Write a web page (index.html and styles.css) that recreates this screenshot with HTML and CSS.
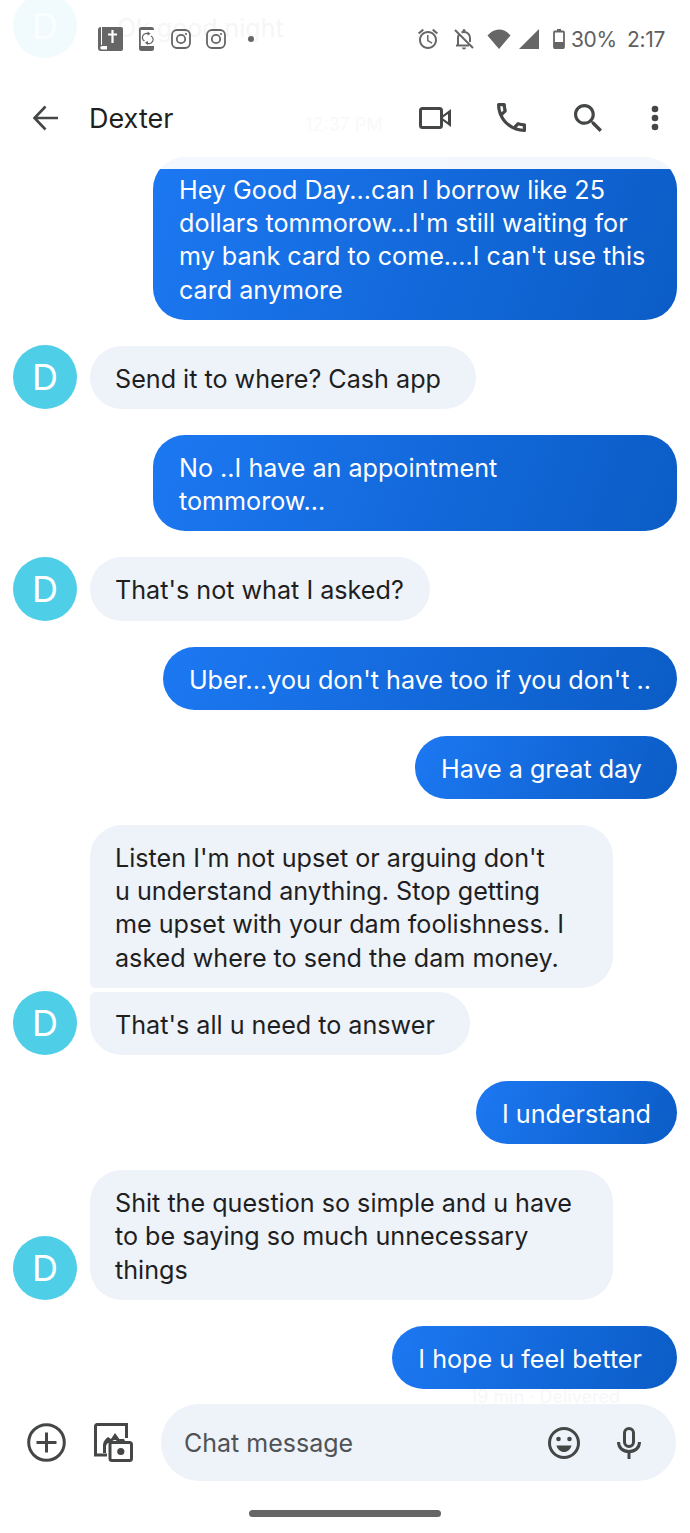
FILE: index.html
```html
<!DOCTYPE html>
<html lang="en">
<head>
    <meta charset="UTF-8">
    <meta name="viewport" content="width=device-width, initial-scale=1.0">
    <title>Dexter</title>
    <link rel="stylesheet" href="styles.css">
</head>
<body>
    <div class="ghost-avatar">D</div>
    <div class="ghost-text">Ok good night</div>
    <div class="ghost-time">12:37 PM</div>
    <div class="veil"></div>

    <div class="status-bar">
        <div class="status-left">
            <svg class="ic-book" viewBox="0 0 25 24"><path fill="#666" d="M3 0h20a2 2 0 0 1 2 2v20a2 2 0 0 1-2 2H3a3 3 0 0 1-3-3V3a3 3 0 0 1 3-3z"/><path fill="none" stroke="#fff" stroke-width="2.200" d="M14.500 3v13M10 7.500h9"/><path fill="none" stroke="#fff" stroke-width="1" d="M3.500 0v18"/><path fill="#fff" d="M4 19h5v3.500H4a1.700 1.700 0 0 1 0-3.500z"/></svg>
            <svg class="ic-sync" viewBox="0 0 15 24"><rect width="15" height="24" rx="2.500" fill="#666"/><rect x="1.800" y="3" width="13.200" height="16" fill="#fff"/><path fill="none" stroke="#666" stroke-width="1.300" d="M5.500 14a3.800 3.800 0 0 1 4-7M12 9a3.800 3.800 0 0 1-4 7"/><path fill="#666" d="M8.500 4.500l3.200 2.200-3.200 1.800zM9 18l-3.200-2.200 3.200-1.800z"/></svg>
            <svg class="ic-insta" viewBox="0 0 20 20"><rect x="1" y="1" width="18" height="18" rx="5" fill="none" stroke="#666" stroke-width="1.800"/><circle cx="10" cy="10" r="4.200" fill="none" stroke="#666" stroke-width="1.800"/><circle cx="15" cy="5" r="1.100" fill="#666"/></svg>
            <svg class="ic-insta" viewBox="0 0 20 20"><rect x="1" y="1" width="18" height="18" rx="5" fill="none" stroke="#666" stroke-width="1.800"/><circle cx="10" cy="10" r="4.200" fill="none" stroke="#666" stroke-width="1.800"/><circle cx="15" cy="5" r="1.100" fill="#666"/></svg>
            <span class="status-dot"></span>
        </div>
        <div class="status-right">
            <svg class="ic-status" viewBox="0 0 24 24"><path fill="#666" d="M22 5.720l-4.600-3.860-1.290 1.530 4.600 3.860L22 5.720zM7.880 3.390L6.600 1.860 2 5.710l1.290 1.530 4.590-3.850zM12.500 8H11v6l4.750 2.850.75-1.230-4-2.370V8zM12 4c-4.970 0-9 4.030-9 9s4.030 9 9 9 9-4.030 9-9-4.030-9-9-9zm0 16c-3.870 0-7-3.130-7-7s3.130-7 7-7 7 3.130 7 7-3.130 7-7 7z"/></svg>
            <svg class="ic-status ic-bell" viewBox="0 0 24 24"><path fill="none" stroke="#666" stroke-width="2" d="M6 17.500V11c0-1.200.3-2.300.8-3.200M9.500 5.500C10.300 5.100 11.100 5 12 5c3.500 0 6 2.700 6 6v4M4 18.500h13M3 3l18 18"/><path fill="#666" d="M10 20.500h4a2 2 0 0 1-4 0zM10.500 5V3.500a1.500 1.500 0 0 1 3 0V5z"/></svg>
            <svg class="ic-wifi" viewBox="0 0 24 20"><path fill="#666" d="M.5 6.500C7-1.500 17-1.500 23.500 6.500L12 20z"/></svg>
            <svg class="ic-signal" viewBox="0 0 20 20"><path fill="#666" d="M20 0v20H0z"/></svg>
            <svg class="ic-battery" viewBox="0 0 12 20"><path fill="#666" d="M4 0h4v2H4z"/><rect x="1" y="2.500" width="10" height="16.500" rx="1" fill="none" stroke="#666" stroke-width="1.800"/><path fill="#666" d="M1 13h10v6a1 1 0 0 1-1 1H2a1 1 0 0 1-1-1z"/></svg>
            <span class="battery-pct">30%</span>
            <span class="clock">2:17</span>
        </div>
    </div>

    <div class="top-bar">
        <svg class="ic-back" viewBox="0 0 26 26"><path fill="none" stroke="#444746" stroke-width="2.600" d="M26 13H3M13.500 1.500L2.500 13l11 11.500"/></svg>
        <span class="contact-name">Dexter</span>
        <svg class="ic-video" viewBox="0 0 32 22"><rect x="1.500" y="1.500" width="21" height="19" rx="2" fill="none" stroke="#444746" stroke-width="3"/><path fill="#444746" d="M24 8l8-6v18l-8-6v-2.500l5 3.500V7l-5 3.500z"/></svg>
        <svg class="ic-call" viewBox="3 3 18 18"><path fill="#444746" d="M6.540 5c.060.890.210 1.760.450 2.590l-1.200 1.200c-.410-1.200-.670-2.470-.760-3.790h1.510m9.860 12.020c.850.240 1.720.390 2.600.450v1.490c-1.320-.090-2.590-.350-3.800-.750l1.200-1.190M7.500 3H4c-.550 0-1 .450-1 1 0 9.390 7.610 17 17 17 .550 0 1-.450 1-1v-3.490c0-.550-.450-1-1-1-1.240 0-2.450-.200-3.570-.570-.100-.040-.210-.050-.310-.050-.260 0-.510.100-.710.290l-2.200 2.200c-2.830-1.450-5.150-3.760-6.590-6.590l2.200-2.200c.280-.280.360-.670.250-1.020C8.700 6.450 8.500 5.250 8.500 4c0-.550-.450-1-1-1z"/></svg>
        <svg class="ic-search" viewBox="3 3 17.500 17.500"><path fill="#444746" d="M15.500 14h-.790l-.280-.270C15.410 12.590 16 11.110 16 9.500 16 5.910 13.090 3 9.500 3S3 5.910 3 9.500 5.910 16 9.500 16c1.610 0 3.090-.590 4.230-1.570l.270.280v.790l5 4.990L20.490 19l-4.990-5zm-6 0C7.010 14 5 11.990 5 9.500S7.010 5 9.500 5 14 7.010 14 9.500 11.990 14 9.500 14z"/></svg>
        <svg class="ic-more" viewBox="0 0 8 26"><circle cx="4" cy="4" r="3.300" fill="#444746"/><circle cx="4" cy="13" r="3.300" fill="#444746"/><circle cx="4" cy="22" r="3.300" fill="#444746"/></svg>
    </div>

    <div class="messages">
        <div class="row out">
            <div class="bubble sent wide">Hey Good Day...can I borrow like 25<br>dollars tommorow...I'm still waiting for<br>my bank card to come....I can't use this<br>card anymore</div>
        </div>
        <div class="row in">
            <div class="avatar">D</div>
            <div class="bubble got roomy">Send it to where? Cash app</div>
        </div>
        <div class="row out">
            <div class="bubble sent wide">No ..I have an appointment<br>tommorow...</div>
        </div>
        <div class="row in">
            <div class="avatar">D</div>
            <div class="bubble got">That's not what I asked?</div>
        </div>
        <div class="row out">
            <div class="bubble sent">Uber...you don't have too if you don't ..</div>
        </div>
        <div class="row out">
            <div class="bubble sent roomy">Have a great day</div>
        </div>
        <div class="row in">
            <div class="avatar">D</div>
            <div class="stack">
                <div class="bubble got wide first">Listen I'm not upset or arguing don't<br>u understand anything. Stop getting<br>me upset with your dam foolishness. I<br>asked where to send the dam money.</div>
                <div class="bubble got last roomy">That's all u need to answer</div>
            </div>
        </div>
        <div class="row out">
            <div class="bubble sent">I understand</div>
        </div>
        <div class="row in">
            <div class="avatar">D</div>
            <div class="bubble got wide">Shit the question so simple and u have<br>to be saying so much unnecessary<br>things</div>
        </div>
        <div class="row out">
            <div class="bubble sent roomy">I hope u feel better</div>
        </div>
        <div class="ghost-delivered">19 min · Delivered</div>
    </div>

    <div class="composer">
        <svg class="ic-plus" viewBox="0 0 39 39"><circle cx="19.500" cy="19.500" r="17.800" fill="none" stroke="#444746" stroke-width="3"/><path fill="none" stroke="#444746" stroke-width="3" d="M19.500 9.500v20M9.500 19.500h20"/></svg>
        <svg class="ic-gallery" viewBox="0 0 39 39"><path fill="none" stroke="#444746" stroke-width="3" d="M32.500 15V1.500H3a1.500 1.500 0 0 0-1.500 1.500v29H13"/><path fill="#444746" d="M9 30V22c0-3 2-6 5-8l3 2 4-6 5 7h-5c-2 0-3 1-4 3h-2c-2 0-3 2-3 4v6z"/><rect x="16" y="19.500" width="21.500" height="18" rx="2" fill="none" stroke="#444746" stroke-width="3"/><path fill="#444746" d="M21 20l2-4h7l2 4z"/><circle cx="26.800" cy="28.500" r="3.600" fill="#444746"/></svg>
        <div class="input-pill">
            <span class="placeholder">Chat message</span>
            <svg class="ic-smile" viewBox="0 0 32 32"><circle cx="16" cy="16" r="14.500" fill="none" stroke="#444746" stroke-width="3"/><circle cx="10.500" cy="12" r="2.300" fill="#444746"/><circle cx="21.500" cy="12" r="2.300" fill="#444746"/><path fill="#444746" d="M8.500 18.500h15c-1 4-4 6.500-7.500 6.500s-6.500-2.500-7.500-6.500z"/></svg>
            <svg class="ic-mic" viewBox="0 0 24 32"><rect x="7.500" y="1.500" width="9" height="18" rx="4.500" fill="none" stroke="#444746" stroke-width="3"/><path fill="none" stroke="#444746" stroke-width="3" d="M1.500 15c0 6 4.500 9.500 10.500 9.500S22.500 21 22.500 15M12 24v8"/></svg>
        </div>
    </div>

    <div class="home-area">
        <div class="home-bar"></div>
    </div>
</body>
</html>
```

FILE: styles.css
```css
body {
    margin: 0;
    width: 690px;
    height: 1533px;
    display: flex;
    flex-direction: column;
    overflow: hidden;
    position: relative;
    background: #fff;
    font-family: Inter, Roboto, sans-serif;
    color: #1f1f1f;
}
svg {
    display: block;
    flex: none;
}

/* faint leftovers from the previous screen */
.ghost-avatar {
    position: absolute;
    left: 13px;
    top: -6px;
    width: 64px;
    height: 64px;
    border-radius: 50%;
    background: #f1fbfd;
    color: #fafefe;
    font-size: 36px;
    line-height: 64px;
    text-align: center;
}
.ghost-text {
    position: absolute;
    left: 117px;
    top: 12px;
    font-size: 25px;
    line-height: 33px;
    color: #f6f6f7;
}
.ghost-time {
    position: absolute;
    left: 305px;
    top: 113px;
    font-size: 18px;
    line-height: 24px;
    color: #f9f9f9;
}
.veil {
    position: absolute;
    left: 0;
    right: 0;
    top: 157px;
    height: 12px;
    background: rgba(255, 255, 255, 0.95);
    z-index: 2;
}

.status-bar {
    height: 78px;
    flex: none;
    display: flex;
    justify-content: space-between;
    align-items: center;
    position: relative;
    padding: 0 25px 0 98px;
    color: #5f5f5f;
}
.status-left {
    display: flex;
    align-items: center;
}
.ic-book { width: 25px; height: 24px; margin-right: 16px; }
.ic-sync { width: 15px; height: 24px; margin-right: 17px; }
.ic-insta { width: 20px; height: 20px; margin-right: 15px; }
.status-dot {
    width: 6px;
    height: 6px;
    border-radius: 50%;
    background: #666;
    margin-left: 7px;
}
.status-right {
    display: flex;
    align-items: center;
    font-size: 21px;
    letter-spacing: -0.300px;
}
.ic-status { width: 24px; height: 24px; margin-right: 12px; }
.ic-bell { margin-right: 11px; }
.ic-wifi { width: 24px; height: 20px; margin-right: 8px; }
.ic-signal { width: 20px; height: 20px; margin-right: 14px; }
.ic-battery { width: 12px; height: 20px; margin-right: 6px; }
.clock { margin-left: 10px; }

.top-bar {
    height: 79px;
    flex: none;
    display: flex;
    align-items: center;
    position: relative;
    padding-left: 32px;
}
.contact-name {
    font-size: 27px;
    margin-left: 31px;
    width: 330px;
    padding-top: 1px;
    color: #1f1f1f;
}
.ic-back { width: 26px; height: 26px; }
.ic-video { width: 32px; height: 22px; margin-right: 46px; }
.ic-call { width: 29px; height: 29px; margin-right: 48px; }
.ic-search { width: 28px; height: 28px; margin-right: 49px; }
.ic-more { width: 8px; height: 26px; }

.messages {
    flex: 1;
    display: flex;
    flex-direction: column;
    gap: 26px;
    min-height: 0;
}
.row {
    display: flex;
    padding: 0 13px;
}
.row.out {
    justify-content: flex-end;
}
.row.in {
    align-items: flex-end;
    gap: 13px;
}
.avatar {
    width: 64px;
    height: 64px;
    margin-top: -1px;
    flex: none;
    border-radius: 50%;
    background: #4fcee8;
    color: #fff;
    font-size: 36px;
    line-height: 64px;
    text-align: center;
}
.stack {
    display: flex;
    flex-direction: column;
    gap: 4px;
}
.bubble {
    box-sizing: border-box;
    padding: 17px 26px 13px 26px;
    border-radius: 32px;
    font-size: 25.150px;
    line-height: 33.200px;
    white-space: nowrap;
}
.bubble.wide {
    width: 524px;
}
.bubble.roomy {
    padding-right: 35px;
}
.sent {
    color: #fff;
    background: linear-gradient(110deg, #1c78f2 0%, #0b5cc6 100%);
}
.got {
    padding-left: 25px;
    background: #eef2f9;
    color: #1f1f1f;
}
.got.wide {
    width: 523px;
}
.got.first {
    border-bottom-left-radius: 6px;
}
.got.last {
    border-top-left-radius: 6px;
    align-self: flex-start;
}
.ghost-delivered {
    margin-top: -24px;
    padding-right: 70px;
    text-align: right;
    font-size: 18px;
    line-height: 12px;
    color: #f6f7f9;
}

.composer {
    flex: none;
    display: flex;
    align-items: center;
    gap: 28px;
    padding-left: 27px;
    position: relative;
}
.ic-plus, .ic-gallery { width: 39px; height: 39px; }
.input-pill {
    width: 515px;
    height: 77px;
    display: flex;
    align-items: center;
    border-radius: 38px;
    background: #eef2f9;
    padding-left: 23px;
    box-sizing: border-box;
}
.placeholder {
    width: 364px;
    font-size: 25px;
    color: #505355;
}
.ic-smile { width: 32px; height: 32px; margin-right: 37px; }
.ic-mic { width: 24px; height: 32px; }

.home-area {
    height: 52px;
    flex: none;
    display: flex;
    justify-content: center;
    padding-top: 29px;
    box-sizing: border-box;
}
.home-bar {
    width: 192px;
    height: 7px;
    border-radius: 4px;
    background: #666;
}
```
